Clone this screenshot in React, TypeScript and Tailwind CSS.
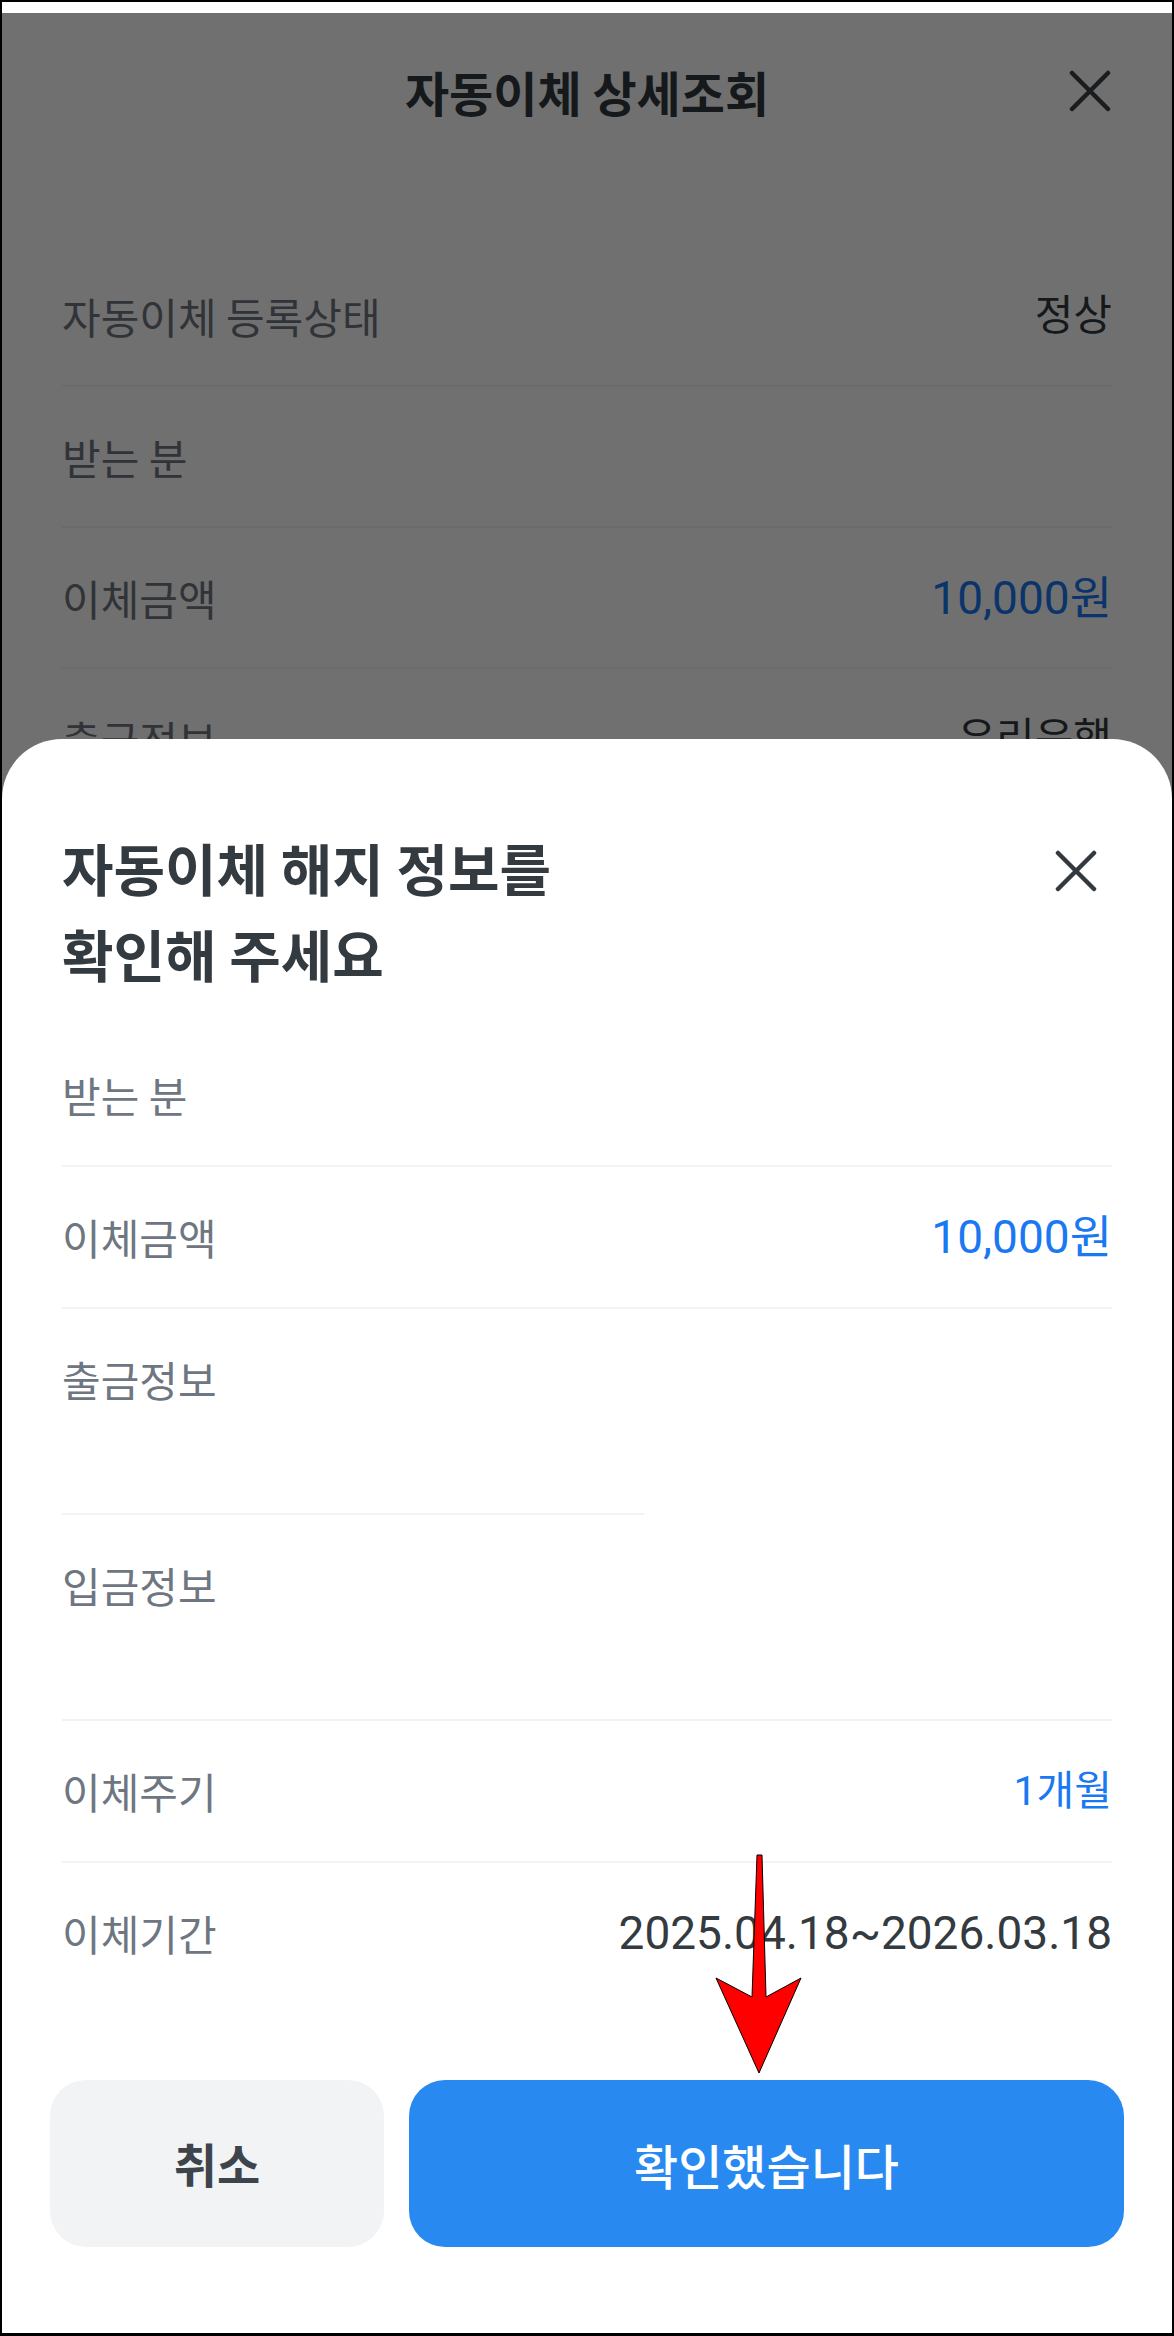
import React from "react";

const KR = '"Noto Sans CJK KR", "Noto Sans", sans-serif';
const NUM = 'Roboto, "Noto Sans CJK KR", sans-serif';

function XIcon({ color, stroke }: { color: string; stroke: number }) {
  return (
    <svg width="42" height="42" viewBox="0 0 42 42" fill="none">
      <path d="M3 3L39 39M39 3L3 39" stroke={color} strokeWidth={stroke} strokeLinecap="round" />
    </svg>
  );
}

function Divider({ className = "" }: { className?: string }) {
  return <div className={`h-[2px] bg-[#f2f3f5] ${className}`} />;
}

function Row({
  label,
  value,
  valueClass = "",
  tall = false,
  h = "h-[140px]",
}: {
  label: string;
  value?: React.ReactNode;
  valueClass?: string;
  tall?: boolean;
  h?: string;
}) {
  return (
    <div
      className={`flex justify-between ${tall ? "h-[204px] items-start pt-[42px]" : `${h} items-center`}`}
    >
      <span className="text-[42px] leading-[56px] text-[#6e7681]" style={{ fontFamily: KR }}>
        {label}
      </span>
      {value !== undefined && (
        <span className={`leading-[56px] ${valueClass}`} style={{ fontFamily: NUM }}>
          {value}
        </span>
      )}
    </div>
  );
}

export default function App() {
  return (
    <div className="relative w-[1174px] h-[2336px] bg-black pt-[2px] px-[2px] pb-[3px]" style={{ fontFamily: KR }}>
      <div className="relative w-full h-full bg-white overflow-hidden flex flex-col">
        {/* status strip */}
        <div className="h-[11px] bg-white shrink-0" />

        {/* background page */}
        <div className="relative flex-1 bg-white">
          <div className="grid grid-cols-[1fr_auto_1fr] items-center h-[156px]">
            <div />
            <h1 className="text-[48px] font-semibold text-[#333a40] leading-none" style={{ fontFamily: KR }}>
              자동이체 상세조회
            </h1>
            <div className="flex justify-end pr-[61px]">
              <XIcon color="#3b4046" stroke={4.5} />
            </div>
          </div>

          <div className="px-[60px] pt-[77px]">
            <Row label="자동이체 등록상태" h="h-[139px]" value="정상" valueClass="text-[42px] text-[#333a40]" />
            <Divider />
            <div className="relative">
              <Row label="받는 분" h="h-[139px]" />
              <div className="absolute right-[-4px] top-[33px] w-[132px] h-[72px] bg-white/[0.04]" />
            </div>
            <Divider />
            <Row label="이체금액" h="h-[139px]" value="10,000원" valueClass="text-[46px] text-[#1a78f2]" />
            <Divider />
            <Row label="출금정보" h="h-[139px]" value="우리은행" valueClass="text-[42px] text-[#333a40]" />
            <Divider />
            <Row label="입금정보" h="h-[139px]" />
          </div>

          {/* dim overlay */}
          <div className="absolute inset-0 bg-black/[0.56]" />
        </div>

        {/* bottom sheet */}
        <div className="absolute left-0 right-0 bottom-0 h-[1594px] bg-white rounded-t-[60px] flex flex-col">
          <div className="px-[60px] pt-[85px]">
            <div className="flex justify-between items-start">
              <h2 className="text-[56px] font-bold leading-[86px] text-[#333a40]" style={{ fontFamily: KR }}>
                자동이체 해지 정보를
                <br />
                확인해 주세요
              </h2>
              <div className="w-[72px] h-[72px] mt-[11px] flex items-center justify-center">
                <XIcon color="#33393f" stroke={4.5} />
              </div>
            </div>

            <div className="mt-[29px]">
              <Row label="받는 분" />
              <Divider />
              <Row label="이체금액" value="10,000원" valueClass="text-[46px] text-[#1a78f2]" />
              <Divider />
              <Row label="출금정보" tall />
              <Divider className="w-[582px]" />
              <Row label="입금정보" tall />
              <Divider />
              <Row label="이체주기" value="1개월" valueClass="text-[41px] text-[#1a78f2]" />
              <Divider />
              <Row label="이체기간" value="2025.04.18~2026.03.18" valueClass="text-[46px] text-[#333a40]" />
            </div>
          </div>

          <div className="px-[48px] pt-[77px] flex gap-[25px]">
            <button className="w-[334px] h-[167px] rounded-[36px] bg-[#f2f3f5] flex items-center justify-center">
              <span className="text-[47px] font-bold text-[#3d444c]" style={{ fontFamily: KR }}>
                취소
              </span>
            </button>
            <button className="flex-1 h-[167px] rounded-[36px] bg-[#288af1] flex items-center justify-center">
              <span className="text-[48px] font-medium text-white" style={{ fontFamily: KR }}>
                확인했습니다
              </span>
            </button>
          </div>
        </div>
      </div>

      {/* red annotation arrow */}
      <svg
        className="absolute inset-0 pointer-events-none"
        width="1174"
        height="2336"
        viewBox="0 0 1174 2336"
      >
        <polygon
          points="757,1855 762,1855 766,1997 801,1978 759,2073 716,1978 752,1997"
          fill="#ff0000"
          stroke="#000"
          strokeWidth="1"
          strokeLinejoin="miter"
        />
      </svg>
    </div>
  );
}
